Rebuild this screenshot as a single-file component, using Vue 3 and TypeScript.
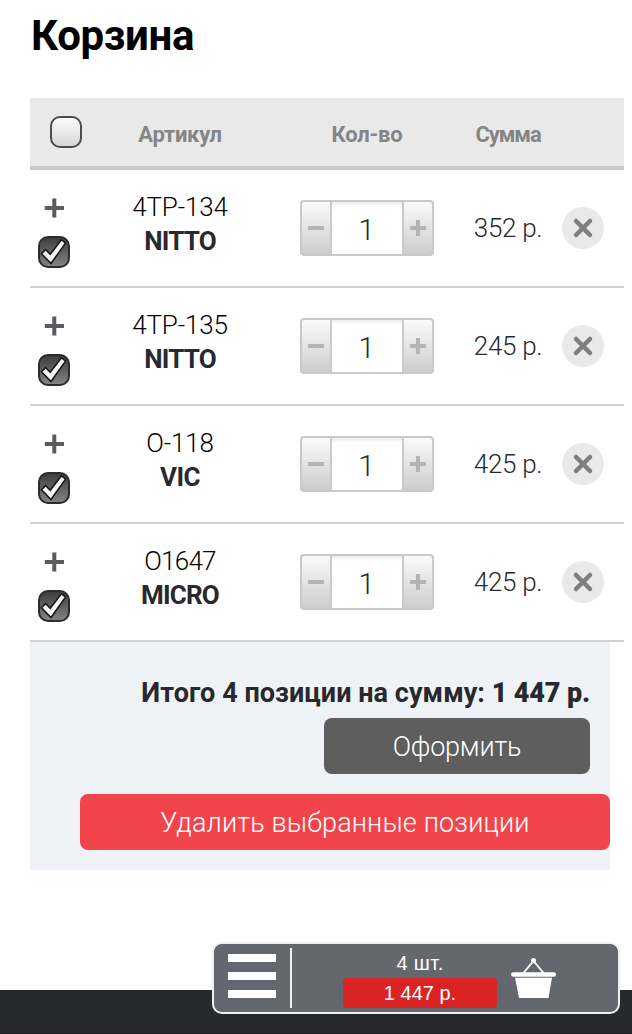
<script setup lang="ts">
import { ref } from 'vue'

interface CartItem {
  article: string
  brand: string
  qty: number
  price: number
  fit: string
}

const items = ref<CartItem[]>([
  { article: '4TP-134', brand: 'NITTO', qty: 1, price: 352, fit: 'nitto' },
  { article: '4TP-135', brand: 'NITTO', qty: 1, price: 245, fit: 'nitto' },
  { article: 'O-118', brand: 'VIC', qty: 1, price: 425, fit: 'vic' },
  { article: 'O1647', brand: 'MICRO', qty: 1, price: 425, fit: 'micro' },
])
</script>

<template>
  <div class="page">
    <svg class="defs" width="0" height="0">
      <linearGradient id="dark" x1="0" y1="0" x2="0" y2="1">
        <stop offset="0" stop-color="#3c3c3c" />
        <stop offset="1" stop-color="#858585" />
      </linearGradient>
    </svg>
    <h1 class="title">Корзина</h1>

    <div class="cart">
      <div class="grid head">
        <div class="head-check"><span class="box"></span></div>
        <div class="cell h-article">Артикул</div>
        <div class="cell h-qty">Кол-во</div>
        <div class="cell h-sum">Сумма</div>
        <div></div>
      </div>

      <div v-for="item in items" :key="item.article" class="grid row">
        <div class="tools">
          <svg class="plus" width="20" height="20" viewBox="0 0 20 20">
            <path d="M10.300 .5V19.500M.8 10H20" stroke="#5a5b5f" stroke-width="4" fill="none" />
          </svg>
          <svg class="check" width="32" height="32" viewBox="0 0 32 32">
            <rect x="1" y="1" width="30" height="30" rx="9" fill="url(#dark)" stroke="#2c2c2c" stroke-width="2" />
            <path d="M3.500 17.700L7.600 13.600L12.200 18.300L23.500 3.800L27.500 7.200L13 27.500Z" fill="#f7f7f7" stroke="#141414" stroke-width="1.500" />
          </svg>
        </div>
        <div class="name">
          <span class="article" :class="item.fit">{{ item.article }}</span>
          <b class="brand" :class="item.fit">{{ item.brand }}</b>
        </div>
        <div class="cell">
          <div class="stepper">
            <span class="step">
              <svg width="16" height="16" viewBox="0 0 16 16"><path d="M0 8H16" stroke="#b4b4b4" stroke-width="4" /></svg>
            </span>
            <span class="qty">{{ item.qty }}</span>
            <span class="step">
              <svg width="16" height="16" viewBox="0 0 16 16"><path d="M0 8H16M8 0V16" stroke="#b4b4b4" stroke-width="4" /></svg>
            </span>
          </div>
        </div>
        <div class="cell price">{{ item.price }} р.</div>
        <div class="remove">
          <svg width="42" height="42" viewBox="0 0 42 42">
            <circle cx="21" cy="21" r="21" fill="#e9e9e9" />
            <path d="M14 14L28 28M28 14L14 28" stroke="#7e7e7e" stroke-width="4.500" stroke-linecap="round" />
          </svg>
        </div>
      </div>

      <div class="summary">
        <div class="total"><span>Итого 4 позиции на сумму:</span> <span class="amount">1 447 р.</span></div>
        <button class="btn order">Оформить</button>
        <button class="btn delete">Удалить выбранные позиции</button>
      </div>
    </div>

    <div class="footer"></div>

    <div class="dock">
      <div class="burger"><i></i><i></i><i></i></div>
      <div class="divider"></div>
      <div class="mini">
        <span class="count">4 шт.</span>
        <span class="sum">1 447 р.</span>
      </div>
      <svg class="basket" width="46" height="40" viewBox="0 0 46 40">
        <path d="M12 15.500L22.500 3L33 15.500" fill="none" stroke="#fff" stroke-width="1.800" />
        <circle cx="22.500" cy="2.600" r="2.500" fill="#fff" />
        <rect x="0" y="14.200" width="45" height="4.600" rx="2.300" fill="#fff" />
        <path d="M4 19.700H41L37.500 40H8Z" fill="#fff" />
      </svg>
    </div>
  </div>
</template>

<style>
body { margin: 0; background: #fff; }
</style>

<style scoped>
.page {
  position: relative;
  width: 632px;
  height: 1034px;
  overflow: hidden;
  box-sizing: border-box;
  display: flex;
  flex-direction: column;
  font-family: Roboto, "Liberation Sans", sans-serif;
  color: #28292d;
}
.defs { position: absolute; }
.title {
  margin: 0;
  height: 98px;
  padding: 11px 0 0 31px;
  box-sizing: border-box;
  font-size: 42px;
  line-height: 49px;
  font-weight: 700;
  letter-spacing: -0.35px;
  color: #000;
  white-space: nowrap;
}
.cart { width: 594px; margin-left: 30px; }
.grid { display: grid; grid-template-columns: 50px 200px 174px 108px 62px; }
.cell { display: flex; align-items: center; justify-content: center; white-space: nowrap; }
.head {
  height: 72px;
  box-sizing: border-box;
  background: #e9e9e9;
  border-bottom: 4px solid #cacaca;
  color: #858585;
  font-size: 22px;
  font-weight: 700;
}
.head .cell { padding-top: 5px; }
.h-article { letter-spacing: -0.3px; }
.h-qty { letter-spacing: -0.2px; }
.h-sum { letter-spacing: -1.1px; }
.head-check { padding: 18px 0 0 20px; }
.box {
  display: block;
  width: 32px;
  height: 32px;
  box-sizing: border-box;
  border: 2px solid #4c4c4c;
  border-radius: 10px;
  background: linear-gradient(#fbfbfb, #d6d6d6);
}
.row { height: 118px; box-sizing: border-box; border-bottom: 2px solid #d2d2d2; }
.tools { display: flex; flex-direction: column; padding: 28px 0 0 8px; }
.plus { margin-left: 6px; }
.check { margin-top: 18px; }
.name { display: flex; flex-direction: column; align-items: center; padding-top: 20px; font-size: 26px; line-height: 34px; white-space: nowrap; }
.article { color: #000; font-weight: 300; letter-spacing: -0.15px; }
.article.micro { letter-spacing: -0.8px; }
.brand { font-weight: 700; letter-spacing: -0.8px; }
.brand.vic { letter-spacing: -0.5px; }
.stepper {
  width: 134px;
  height: 56px;
  box-sizing: border-box;
  border: 2px solid #c9c9c9;
  border-radius: 4px;
  display: flex;
  background: linear-gradient(#fafafa, #cdcdcd);
}
.step { flex: 1; display: flex; align-items: center; justify-content: center; }
.qty {
  width: 70px;
  border: solid #cbcbcb;
  border-width: 0 2px;
  background: linear-gradient(#ececec, #fff 5px);
  font-size: 30px;
  font-weight: 300;
  line-height: 55px;
  text-align: center;
  text-indent: -1px;
}
.price { font-size: 26px; font-weight: 300; letter-spacing: -0.3px; }
.remove { padding-top: 37px; }
.remove svg { display: block; }
.summary {
  width: 580px;
  height: 228px;
  box-sizing: border-box;
  padding-top: 34px;
  background: #eff3f7;
  display: flex;
  flex-direction: column;
  align-items: flex-end;
}
.total { height: 42px; line-height: 34px; margin-right: 20px; font-size: 27px; font-weight: 700; white-space: nowrap; letter-spacing: 0.05px; }
.amount { font-weight: 900; letter-spacing: -0.15px; }
.btn {
  height: 56px;
  border: 0;
  padding: 2px 0 0;
  border-radius: 8px;
  color: #fff;
  font-family: inherit;
  font-size: 27px;
  font-weight: 300;
  flex: none;
}
.order { width: 266px; margin-right: 20px; background: #5e5e5e; letter-spacing: -0.2px; }
.delete { width: 530px; margin-top: 20px; background: #f2454b; letter-spacing: 0.15px; }
.footer { height: 44px; box-sizing: border-box; margin-top: auto; background: #28292d; border-bottom: 1px solid #211a20; }
.dock {
  position: absolute;
  left: 212px;
  top: 942px;
  width: 408px;
  height: 72px;
  box-sizing: border-box;
  border: 2px solid #eeeff0;
  border-radius: 10px;
  background: #65676f;
  display: flex;
}
.burger { width: 48px; margin: 10px 0 0 14px; display: flex; flex-direction: column; gap: 10px; }
.burger i { height: 8px; background: #fff; }
.divider { width: 2px; height: 60px; margin: 4px 0 0 14px; background: #eeeff0; }
.mini {
  width: 154px;
  margin: 4px 0 0 51px;
  display: flex;
  flex-direction: column;
  font-family: "Liberation Sans", Arial, sans-serif;
  font-size: 20px;
  line-height: 30px;
  color: #fff;
  text-align: center;
}
.count { letter-spacing: 0.4px; }
.sum { height: 30px; border-radius: 4px; background: #da2424; }
.basket { margin: 14px 0 0 14px; }
</style>
